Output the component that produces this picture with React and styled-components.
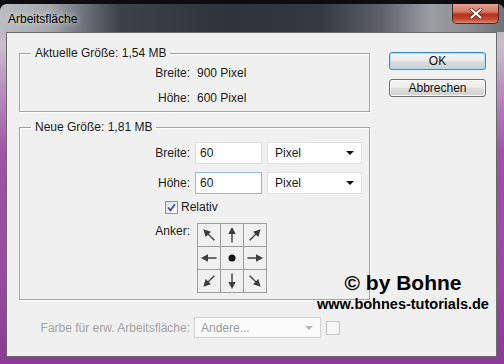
import styled, { createGlobalStyle } from 'styled-components';

const GlobalStyle = createGlobalStyle`
  html, body {
    margin: 0;
    padding: 0;
    background: #111;
  }
  body {
    font-family: "Liberation Sans", Arial, sans-serif;
    font-size: 12px;
  }
`;

const Window = styled.div`
  width: 504px;
  height: 364px;
  background: #0d0d0f;
  overflow: hidden;
`;

const Frame = styled.div`
  margin-top: 4px;
  height: 360px;
  display: flex;
  flex-direction: column;
  border-radius: 7px 7px 0 0;
  overflow: hidden;
  background: linear-gradient(
    to bottom,
    #9ea1a6 0px,
    #c9c0cc 40px,
    #b889bd 90px,
    #9d54a4 150px,
    #984c9f 260px,
    #8c3b94 360px
  );
`;

const TitleBar = styled.div`
  height: 28px;
  flex: none;
  display: flex;
  align-items: flex-start;
  background: linear-gradient(
    to right,
    #b9bcc0 0px,
    #a4a8ad 50px,
    #6c7077 85px,
    #3d424a 120px,
    #2f343b 230px,
    #343940 320px,
    #5c6066 380px,
    #9a9ea3 430px,
    #8a8e93 470px,
    #6f7378 504px
  );
`;

const Title = styled.span`
  padding: 8px 0 0 8px;
  font-size: 12px;
  line-height: 14px;
  color: #000;
  text-shadow: 0 0 6px rgba(255, 255, 255, 0.9);
`;

const CloseButton = styled.div`
  margin-left: auto;
  margin-right: 5px;
  width: 47px;
  height: 20px;
  box-sizing: border-box;
  display: flex;
  align-items: center;
  justify-content: center;
  border: 1px solid #4a2a28;
  border-top: none;
  border-radius: 0 0 5px 5px;
  background: linear-gradient(
    to bottom,
    #e7a392 0%,
    #d47a66 40%,
    #b8321f 55%,
    #c3472f 80%,
    #e08a6a 100%
  );
`;

const Body = styled.div`
  position: relative;
  flex: 1;
  margin: 0 7px 0 6px;
  border: 1px solid #6a6a6a;
  background: #f0f0f0;
  display: grid;
  grid-template-columns: 351px 97px;
  column-gap: 19px;
  padding: 0 10px 0 12px;
  color: #1a1a1a;
`;

const BottomEdge = styled.div`
  height: 7px;
  flex: none;
`;

const LeftColumn = styled.div`
  display: flex;
  flex-direction: column;
  padding-top: 13px;
`;

const Group = styled.fieldset`
  margin: ${p => p.$mt || 0}px 0 0 0;
  padding: ${p => p.$pt}px 0 ${p => p.$pb}px 0;
  min-width: 0;
  border: 1px solid #a3a3a3;
  box-shadow: 1px 1px 0 #fff, inset 1px 1px 0 #fff;
  display: flex;
  flex-direction: column;
`;

const Legend = styled.legend`
  margin-left: 11px;
  padding: 0 4px;
  font-size: 12px;
  line-height: 14px;
  color: #1a1a1a;
`;

const Row = styled.div`
  display: grid;
  grid-template-columns: 170px 67px 95px;
  column-gap: 5px;
  align-items: center;
  margin-top: ${p => p.$mt || 0}px;
  height: ${p => p.$h}px;
`;

const Label = styled.span`
  text-align: right;
  line-height: 14px;
  align-self: ${p => (p.$top ? 'start' : 'center')};
  margin-top: ${p => (p.$top ? 1 : 0)}px;
  color: ${p => (p.$disabled ? '#a3a3a3' : '#1a1a1a')};
`;

const Value = styled.span`
  grid-column: 2 / span 2;
  padding-left: 2px;
  line-height: 14px;
`;

const TextInput = styled.div`
  height: 22px;
  box-sizing: border-box;
  border: 1px solid ${p => (p.$focused ? '#8fb8e4' : '#dcdcdc')};
  background: #fff;
  padding-left: 4px;
  display: flex;
  align-items: center;
`;

const SelectBox = styled.div`
  height: ${p => p.$h || 22}px;
  box-sizing: border-box;
  border: 1px solid ${p => (p.$disabled ? '#d2d2d2' : '#e0e0e0')};
  background: ${p => (p.$disabled ? '#fafafa' : '#fff')};
  color: ${p => (p.$disabled ? '#9a9a9a' : '#1a1a1a')};
  padding: 0 7px 0 ${p => p.$pl || 7}px;
  display: flex;
  align-items: center;
  justify-content: space-between;
`;

const Caret = styled.span`
  width: 0;
  height: 0;
  border-left: 4px solid transparent;
  border-right: 4px solid transparent;
  border-top: 4px solid ${p => (p.$disabled ? '#b5b5b5' : '#111')};
`;

const CheckRow = styled.div`
  margin-top: 6px;
  height: 14px;
  display: flex;
  align-items: center;
  gap: 3px;
  padding-left: 145px;
`;

const CheckBox = styled.div`
  width: 13px;
  height: 13px;
  box-sizing: border-box;
  border: 1px solid #8e8f8f;
  background: linear-gradient(135deg, #dcdcdc, #fff);
  display: flex;
  align-items: center;
  justify-content: center;
`;

const AnchorGrid = styled.div`
  margin-left: 2px;
  width: 70px;
  height: 70px;
  box-sizing: border-box;
  padding: 1px;
  display: grid;
  grid-template-columns: repeat(3, 22px);
  grid-template-rows: repeat(3, 22px);
  gap: 1px;
  background: #9d9d9d;
`;

const AnchorCell = styled.div`
  background: #f0f0f0;
  display: flex;
  align-items: center;
  justify-content: center;
`;

const BottomRow = styled.div`
  margin-top: 17px;
  display: grid;
  grid-template-columns: 171px 127px 14px;
  column-gap: 4px;
  align-items: center;
`;

const SwatchBox = styled.div`
  width: 14px;
  height: 14px;
  box-sizing: border-box;
  border: 1px solid #c6c6c6;
  background: #f6f6f6;
  margin-left: 1px;
`;

const RightColumn = styled.div`
  padding-top: 19px;
  display: flex;
  flex-direction: column;
  gap: 9px;
`;

const Button = styled.div`
  height: 18px;
  box-sizing: border-box;
  border: 1px solid ${p => (p.$primary ? '#3d8bc4' : '#707070')};
  border-radius: 3px;
  box-shadow: ${p => (p.$primary ? 'inset 0 0 0 1px #a9dcf6' : 'inset 0 0 0 1px #fcfcfc')};
  background: linear-gradient(
    to bottom,
    #f4f4f4 0%,
    #ebebeb 48%,
    #dddddd 52%,
    #cfcfcf 100%
  );
  display: flex;
  align-items: center;
  justify-content: center;
  font-size: 12px;
  color: #111;
`;

const Watermark = styled.div`
  position: absolute;
  left: 309px;
  top: 238px;
  width: 174px;
  text-align: center;
  font-family: "Liberation Sans", Arial, sans-serif;
  font-weight: bold;
  color: #000;
`;

const MarkTitle = styled.div`
  font-size: 21px;
  line-height: 24px;
`;

const MarkUrl = styled.div`
  margin-top: 1px;
  font-size: 14.5px;
  line-height: 16px;
  white-space: nowrap;
`;

const Arrow = ({ deg }) => (
  <svg width="22" height="22" viewBox="0 0 22 22">
    <g transform={`rotate(${deg} 11 11)`}>
      <line x1="11" y1="18.5" x2="11" y2="8" stroke="#3b3b3b" strokeWidth="1.4" />
      <polygon points="11,3 7.3,10 14.7,10" fill="#3b3b3b" />
    </g>
  </svg>
);

const anchors = [315, 0, 45, 270, null, 90, 225, 180, 135];

const App = () => (
  <Window>
    <GlobalStyle />
    <Frame>
      <TitleBar>
        <Title>Arbeitsfläche</Title>
        <CloseButton>
          <svg width="14" height="11" viewBox="0 0 14 11">
            <path d="M2.5 1.5 L11.5 9.5 M11.5 1.5 L2.5 9.5" stroke="#5a1a12" strokeWidth="3.6" strokeLinecap="round" />
            <path d="M2.5 1.5 L11.5 9.5 M11.5 1.5 L2.5 9.5" stroke="#fff" strokeWidth="2.2" strokeLinecap="round" />
          </svg>
        </CloseButton>
      </TitleBar>

      <Body>
        <LeftColumn>
          <Group $pt={6} $pb={6}>
            <Legend>Aktuelle Größe: 1,54 MB</Legend>
            <Row $h={14}>
              <Label>Breite:</Label>
              <Value>900 Pixel</Value>
            </Row>
            <Row $h={14} $mt={11}>
              <Label>Höhe:</Label>
              <Value>600 Pixel</Value>
            </Row>
          </Group>

          <Group $mt={8} $pt={8} $pb={6}>
            <Legend>Neue Größe: 1,81 MB</Legend>
            <Row $h={22}>
              <Label>Breite:</Label>
              <TextInput>60</TextInput>
              <SelectBox>
                Pixel
                <Caret />
              </SelectBox>
            </Row>
            <Row $h={22} $mt={8}>
              <Label>Höhe:</Label>
              <TextInput $focused>60</TextInput>
              <SelectBox>
                Pixel
                <Caret />
              </SelectBox>
            </Row>
            <CheckRow>
              <CheckBox>
                <svg width="11" height="11" viewBox="0 0 11 11">
                  <path d="M2 5.5 L4.5 8.3 L9 2.2" fill="none" stroke="#41509a" strokeWidth="1.8" />
                </svg>
              </CheckBox>
              <span>Relativ</span>
            </CheckRow>
            <Row $h={70} $mt={9}>
              <Label $top>Anker:</Label>
              <AnchorGrid>
                {anchors.map((deg, i) => (
                  <AnchorCell key={i}>
                    {deg === null ? (
                      <svg width="22" height="22" viewBox="0 0 22 22">
                        <circle cx="11" cy="11" r="3.5" fill="#111" />
                      </svg>
                    ) : (
                      <Arrow deg={deg} />
                    )}
                  </AnchorCell>
                ))}
              </AnchorGrid>
            </Row>
          </Group>

          <BottomRow>
            <Label $disabled>Farbe für erw. Arbeitsfläche:</Label>
            <SelectBox $disabled $h={21} $pl={6}>
              Andere...
              <Caret $disabled />
            </SelectBox>
            <SwatchBox />
          </BottomRow>
        </LeftColumn>

        <RightColumn>
          <Button $primary>OK</Button>
          <Button>Abbrechen</Button>
        </RightColumn>

        <Watermark>
          <MarkTitle>© by Bohne</MarkTitle>
          <MarkUrl>www.bohnes-tutorials.de</MarkUrl>
        </Watermark>
      </Body>
      <BottomEdge />
    </Frame>
  </Window>
);

export default App;
